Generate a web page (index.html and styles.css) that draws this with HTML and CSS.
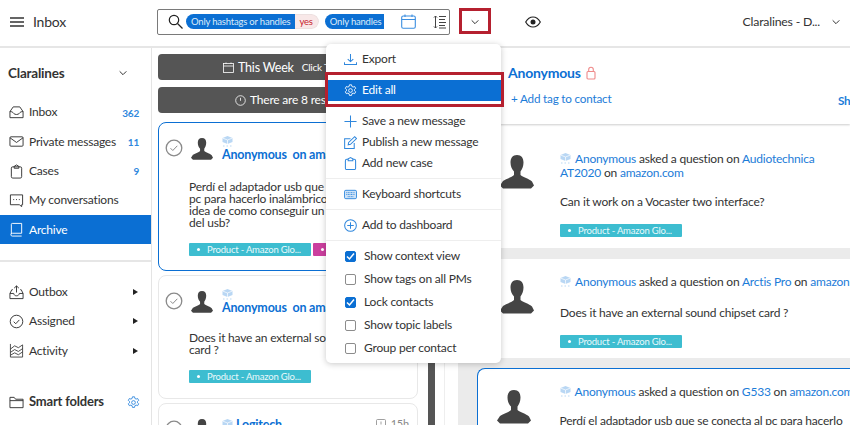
FILE: index.html
```html
<!DOCTYPE html>
<html lang="en">
<head>
<meta charset="utf-8">
<title>Inbox</title>
<link rel="stylesheet" href="styles.css">
</head>
<body>
<svg class="defs" width="0" height="0">
  <symbol id="avatar" viewBox="0 0 34 34"><path d="M17 0c4.500 0 6.500 3 6.500 7.500 0 4-1.500 7-3 9v3.500c2 2 9 4 11.500 6.500l2 4-3 3H3l-3-3 3-4.500C5.500 24 12.500 22 14 20v-3.500c-2-2-3.500-5-3.500-9C10.500 3 12.500 0 17 0z" fill="#444"/></symbol>
  <symbol id="cube" viewBox="0 0 11 11"><path d="M5.500 0l5 2v4l-5 2-5-2V2z" fill="#b9d7f4"/><path d="M5.500 4v4M.5 2l5 2 5-2" stroke="#fff" stroke-width=".7" fill="none"/><path d="M1 10h1.500M4.500 10H6M8 10h1.500" stroke="#b9d7f4" stroke-width="1.200"/></symbol>
  <symbol id="check" viewBox="0 0 18 18"><circle cx="9" cy="9" r="7.800" fill="none" stroke="#8a8a8a" stroke-width="1.300"/><path d="M5.500 9.200l2.300 2.300 4.500-4.700" fill="none" stroke="#8a8a8a"/></symbol>
  <symbol id="chev" viewBox="0 0 12 12"><path d="M2 4l4 4 4-4" fill="none" stroke="#333" stroke-width="1.200"/></symbol>
  <symbol id="gear" viewBox="0 0 16 16"><path d="M6.700 1h2.600l.4 2 1.500.8 1.900-.7 1.300 2.300-1.500 1.300v1.600l1.500 1.300-1.300 2.300-1.900-.7-1.500.8-.4 2H6.700l-.4-2-1.500-.8-1.900.7L1.600 9.600l1.500-1.300V6.700L1.600 5.400l1.300-2.300 1.900.7 1.500-.8z" fill="none" stroke="currentColor" stroke-width="1.100"/><circle cx="8" cy="8" r="2.300" fill="none" stroke="currentColor" stroke-width="1.100"/></symbol>
</svg>

<header class="topbar">
  <div class="brand">
    <svg class="burger" width="14" height="10" viewBox="0 0 14 10"><path d="M0 1h14M0 5h14M0 9h14" stroke="#333" stroke-width="1.300"/></svg>
    <span>Inbox</span>
  </div>
  <div class="search">
    <svg class="search-glass" width="15" height="15" viewBox="0 0 15 15"><circle cx="6" cy="6" r="4.700" fill="none" stroke="#222" stroke-width="1.200"/><path d="M9.500 9.500l5 5" stroke="#222" stroke-width="1.300"/></svg>
    <span class="chip"><span class="chip-key">Only hashtags or handles</span><span class="chip-val">yes</span></span>
    <span class="chip chip-cut"><span class="chip-key">Only handles</span></span>
    <svg class="search-cal" width="15" height="15" viewBox="0 0 15 15"><rect x=".7" y="2" width="13.600" height="12.300" rx="1.500" fill="none" stroke="#3b8ee0" stroke-width="1.100"/><path d="M.7 5.500h13.600M4 .5v2.500M11 .5v2.500" stroke="#3b8ee0" stroke-width="1.100"/></svg>
    <svg class="search-sort" width="14" height="14" viewBox="0 0 14 14"><path d="M2.500 1v12M1 2.500L2.500 1 4 2.500M1 11.500L2.500 13 4 11.500M6 1.500h7M6 4.500h6M6 7.500h7M6 10.500h6M6 13h7" fill="none" stroke="#444" stroke-width="1"/></svg>
  </div>
  <button class="more" type="button"><svg width="10" height="10"><use href="#chev"/></svg></button>
  <svg class="eye" width="16" height="12" viewBox="0 0 16 12"><path d="M.7 6C2.500 2.800 5 1 8 1s5.500 1.800 7.300 5C13.500 9.200 11 11 8 11S2.500 9.200.7 6z" fill="none" stroke="#222" stroke-width="1.200"/><circle cx="8" cy="6" r="2.500" fill="#222"/></svg>
  <div class="account"><span>Claralines - D...</span><svg width="10" height="10"><use href="#chev"/></svg></div>
</header>

<main class="app">
  <aside class="side">
    <div class="side-title"><span>Claralines</span><svg width="10" height="10"><use href="#chev"/></svg></div>
    <nav class="nav">
      <a class="nav-item"><svg class="nav-ic" viewBox="0 0 16 16"><path d="M1 7l3.500-5h7L15 7v6.500H1zM1 7c2 0 3 .5 4 2 1.500 1.500 4.500 1.500 6 0 1-1.500 2-2 4-2" fill="none" stroke="#333"/></svg><span class="nav-label">Inbox</span><span class="count">362</span></a>
      <a class="nav-item"><svg class="nav-ic" viewBox="0 0 16 16"><rect x="1" y="3" width="14" height="10" rx="1" fill="none" stroke="#333"/><path d="M1 4l7 5 7-5" fill="none" stroke="#333"/></svg><span class="nav-label">Private messages</span><span class="count">11</span></a>
      <a class="nav-item"><svg class="nav-ic" viewBox="0 0 16 16"><rect x="2.500" y="3" width="11" height="12" rx="1.500" fill="none" stroke="#333"/><path d="M5.500 4.500V2.500L8 1l2.500 1.500v2z" fill="none" stroke="#333"/></svg><span class="nav-label">Cases</span><span class="count">9</span></a>
      <a class="nav-item"><svg class="nav-ic" viewBox="0 0 16 16"><path d="M1.500 2h13v10.500h-1v2l-2.500-2H1.500z" fill="none" stroke="#333"/><path d="M4.500 7h1M7.500 7h1M10.500 7h1" stroke="#333"/></svg><span class="nav-label">My conversations</span></a>
      <a class="nav-item nav-active"><svg class="nav-ic" viewBox="0 0 16 16"><path d="M2.500 13V2.500A1 1 0 0 1 3.500 1.500h10v10.500h-10a1.500 1.500 0 0 0 0 3h10" fill="none" stroke="#fff"/></svg><span class="nav-label">Archive</span></a>
    </nav>
    <hr class="side-rule">
    <nav class="nav">
      <a class="nav-item"><svg class="nav-ic" viewBox="0 0 16 16"><path d="M4 5H3L1 9v5.500h14V9l-2-4h-1M1 9h4c.5 2 1.500 2.500 3 2.500s2.500-.5 3-2.500h4M8 8V1M5.500 3.300L8 1l2.500 2.300" fill="none" stroke="#333"/></svg><span class="nav-label">Outbox</span><span class="tri"></span></a>
      <a class="nav-item"><svg class="nav-ic" viewBox="0 0 16 16"><circle cx="8" cy="8" r="6.700" fill="none" stroke="#333"/><path d="M5 8.200l2.200 2.200L11 6.300" fill="none" stroke="#333"/></svg><span class="nav-label">Assigned</span><span class="tri"></span></a>
      <a class="nav-item"><svg class="nav-ic" viewBox="0 0 16 16"><path d="M1.500 1v14h13V2L10 5 6 3 1.500 6.500M1.500 10L6 7l4 2 4.500-3M1.500 13L6 10.500l4 2 4.500-3" fill="none" stroke="#333" stroke-width=".9"/></svg><span class="nav-label">Activity</span><span class="tri"></span></a>
    </nav>
    <div class="folders">
      <svg class="nav-ic" viewBox="0 0 16 16"><path d="M1 13.500v-11h4.500l1.500 2h8v9zM1 6h14" fill="none" stroke="#333"/></svg>
      <strong>Smart folders</strong>
      <svg class="folders-gear" width="13" height="13"><use href="#gear"/></svg>
    </div>
  </aside>

  <section class="list">
    <div class="list-col">
      <div class="bar"><svg width="11" height="11" viewBox="0 0 11 11"><rect x=".5" y="1.500" width="10" height="9" fill="none" stroke="#fff" stroke-width=".8"/><path d="M.5 4h10M3 .5V2M8 .5V2" stroke="#fff" stroke-width=".8"/></svg><span class="bar-main">This Week</span><span class="bar-sub">Click To Change</span></div>
      <div class="bar"><svg width="11" height="11" viewBox="0 0 11 11"><circle cx="5.500" cy="5.500" r="4.800" fill="none" stroke="#fff" stroke-width=".8"/><path d="M5.500 2.800v3" stroke="#fff" stroke-width=".8"/></svg><span class="bar-main bar-plain">There are 8 results</span></div>

      <article class="card card-sel">
        <div class="card-head">
          <svg class="card-check" width="18" height="18"><use href="#check"/></svg>
          <svg class="card-av" width="22" height="22"><use href="#avatar"/></svg>
          <div class="card-who"><svg class="card-cube" width="11" height="11"><use href="#cube"/></svg><strong>Anonymous &nbsp;on amazon</strong></div>
        </div>
        <p class="card-text">Perdí el adaptador usb que se conecta<br>pc para hacerlo inalámbrico<br>idea de como conseguir un<br>del usb?</p>
        <div class="tags"><span class="tag">Product - Amazon Glo...</span><span class="tag tag-pink">Other</span></div>
      </article>

      <article class="card">
        <div class="card-head">
          <svg class="card-check" width="18" height="18"><use href="#check"/></svg>
          <svg class="card-av" width="22" height="22"><use href="#avatar"/></svg>
          <div class="card-who"><svg class="card-cube" width="11" height="11"><use href="#cube"/></svg><strong>Anonymous &nbsp;on amazon</strong></div>
        </div>
        <p class="card-text">Does it have an external sound chipset<br>card ?</p>
        <div class="tags"><span class="tag">Product - Amazon Glo...</span></div>
      </article>

      <article class="card card-last">
        <div class="card-head">
          <svg class="card-check" width="18" height="18"><use href="#check"/></svg>
          <svg class="card-av" width="22" height="22"><use href="#avatar"/></svg>
          <div class="card-who card-who-row"><svg class="card-cube" width="11" height="11"><use href="#cube"/></svg><strong>Logitech</strong><span class="card-time"><svg width="10" height="10" viewBox="0 0 10 10"><rect x=".5" y=".5" width="9" height="9" rx="1" fill="none" stroke="#888" stroke-width=".8"/><path d="M5 2.500v3" stroke="#888" stroke-width=".8"/></svg>15h</span></div>
        </div>
      </article>
    </div>
    <div class="scroll"><span class="thumb"></span></div>
  </section>

  <section class="detail">
    <div class="contact">
      <div class="contact-name"><strong>Anonymous</strong><svg width="10" height="14" viewBox="0 0 10 14"><rect x="1" y="5.500" width="8" height="7.500" rx="1" fill="none" stroke="#ef8a8a" stroke-width="1.100"/><path d="M2.700 5.500V3.500a2.300 2.300 0 0 1 4.600 0v2" fill="none" stroke="#ef8a8a" stroke-width="1.100"/></svg></div>
      <div class="contact-row"><a class="contact-tag">+ Add tag to contact</a><strong class="contact-show">Show</strong></div>
    </div>
    <div class="thread">
      <article class="msg">
        <svg class="msg-av" width="34" height="34"><use href="#avatar"/></svg>
        <div class="msg-body">
          <p class="msg-line"><svg class="msg-cube" width="11" height="11"><use href="#cube"/></svg><a>Anonymous</a> asked a question on <a>Audiotechnica</a><br><a>AT2020</a> on <a>amazon.com</a></p>
          <p class="msg-text">Can it work on a Vocaster two interface?</p>
          <span class="tag">Product - Amazon Glo...</span>
        </div>
      </article>
      <article class="msg msg-two">
        <svg class="msg-av" width="34" height="34"><use href="#avatar"/></svg>
        <div class="msg-body">
          <p class="msg-line msg-nowrap"><svg class="msg-cube" width="11" height="11"><use href="#cube"/></svg><a>Anonymous</a> asked a question on <a>Arctis Pro</a> on <a>amazon.com</a></p>
          <p class="msg-text">Does it have an external sound chipset card ?</p>
          <span class="tag">Product - Amazon Glo...</span>
        </div>
      </article>
      <article class="msg msg-sel">
        <svg class="msg-av" width="34" height="34"><use href="#avatar"/></svg>
        <div class="msg-body">
          <p class="msg-line msg-nowrap"><svg class="msg-cube" width="11" height="11"><use href="#cube"/></svg><a>Anonymous</a> asked a question on <a>G533</a> on <a>amazon.com</a></p>
          <p class="msg-text msg-nowrap">Perdí el adaptador usb que se conecta al pc para hacerlo</p>
        </div>
      </article>
    </div>
  </section>
</main>

<div class="menu">
  <a class="mi"><svg class="mi-ic" viewBox="0 0 14 14"><path d="M7 1v8M4 6.500L7 9.300l3-2.800M.5 10v2.500h13V10" fill="none" stroke="#2f87dd" stroke-width="1.100"/></svg><span>Export</span></a>
  <a class="mi mi-active"><svg class="mi-ic" viewBox="0 0 16 16"><use href="#gear"/></svg><span>Edit all</span></a>
  <div class="mi-group">
    <a class="mi"><svg class="mi-ic" viewBox="0 0 14 14"><path d="M7 .5v13M.5 7h13" stroke="#2f87dd" stroke-width="1.100"/></svg><span>Save a new message</span></a>
    <a class="mi"><svg class="mi-ic" viewBox="0 0 14 14"><path d="M11 7.500v6H.7V3H7" fill="none" stroke="#2f87dd" stroke-width="1.100"/><path d="M4.500 9.500l.5-2.500L11.500.8l2 2L7 9z" fill="none" stroke="#2f87dd" stroke-width="1.100"/></svg><span>Publish a new message</span></a>
    <a class="mi"><svg class="mi-ic" viewBox="0 0 14 14"><rect x="1.500" y="2.500" width="11" height="11" rx="1.500" fill="none" stroke="#2f87dd" stroke-width="1.100"/><path d="M4.500 4V2L7 .7 9.500 2v2z" fill="#fff" stroke="#2f87dd" stroke-width="1.100"/></svg><span>Add new case</span></a>
  </div>
  <div class="mi-group mi-ruled">
    <a class="mi"><svg class="mi-ic" viewBox="0 0 14 10"><rect x=".5" y=".5" width="13" height="9" rx="1.500" fill="#cfe3f7" stroke="#2f87dd"/><path d="M2.500 3h9M2.500 5h9M4 7.300h6" stroke="#2f87dd" stroke-dasharray="1 .7"/></svg><span>Keyboard shortcuts</span></a>
  </div>
  <div class="mi-group mi-ruled">
    <a class="mi"><svg class="mi-ic" viewBox="0 0 14 14"><circle cx="7" cy="7" r="6.300" fill="none" stroke="#2f87dd" stroke-width="1.100"/><path d="M7 3.500v7M3.500 7h7" stroke="#2f87dd" stroke-width="1.100"/></svg><span>Add to dashboard</span></a>
  </div>
  <div class="checks mi-ruled">
    <label class="ck"><span class="box box-on"><svg width="9" height="9" viewBox="0 0 9 9"><path d="M1 4.500l2.500 2.500L8 1.500" fill="none" stroke="#fff" stroke-width="1.500"/></svg></span>Show context view</label>
    <label class="ck"><span class="box"></span>Show tags on all PMs</label>
    <label class="ck"><span class="box box-on"><svg width="9" height="9" viewBox="0 0 9 9"><path d="M1 4.500l2.500 2.500L8 1.500" fill="none" stroke="#fff" stroke-width="1.500"/></svg></span>Lock contacts</label>
    <label class="ck"><span class="box"></span>Show topic labels</label>
    <label class="ck"><span class="box"></span>Group per contact</label>
  </div>
</div>
<div class="callout callout-more"></div>
<div class="callout callout-edit"></div>
</body>
</html>
```

FILE: styles.css
```css
* { box-sizing: border-box; }
html, body { margin: 0; height: 100%; overflow: hidden; }
body {
  position: relative;
  width: 850px;
  height: 425px;
  background: #fff;
  color: #333;
  font: 12px/1.2 Lato, "Noto Sans", sans-serif;
  letter-spacing: -.2px;
  display: flex;
  flex-direction: column;
}
.defs { position: absolute; }
p { margin: 0; }
a { color: inherit; }
strong { font-weight: 700; }

.topbar {
  flex: 0 0 48px;
  display: flex;
  align-items: center;
  padding: 0 0 2px 10px;
  border-bottom: 2px solid #e6e6e6;
}
.brand { width: 147px; display: flex; align-items: center; gap: 9px; font-size: 14px; }
.search {
  width: 293px;
  height: 26px;
  border: 1px solid #7a7a7a;
  border-radius: 2px;
  display: flex;
  align-items: center;
  padding-left: 10px;
  margin-top: -1px;
  flex: none;
}
.search-glass { flex: none; }
.chip {
  margin-left: 3px;
  height: 15px;
  display: flex;
  flex: none;
  border-radius: 8px;
  overflow: hidden;
  font-size: 9.500px;
  line-height: 15px;
  white-space: nowrap;
}
.chip-key { background: #0b6fd3; color: #dcebfa; padding: 0 5px; }
.chip-val { background: #f8e8e8; color: #c8242f; padding: 0 5px 0 4px; border: 1px solid #ece0e0; border-left: 0; border-radius: 0 8px 8px 0; line-height: 13px; }
.chip-cut { margin-left: 6px; border-radius: 8px 0 0 8px; width: 59px; }
.chip-cut .chip-key { width: 59px; padding-right: 0; }
.search-cal { margin-left: 17px; flex: none; }
.search-sort { margin-left: 17px; flex: none; }
.more {
  width: 32px;
  height: 26px;
  margin-left: 9px;
  margin-top: -1px;
  padding: 0;
  background: none;
  border: 0;
  display: flex;
  flex: none;
  align-items: center;
  justify-content: center;
}
.eye { margin-left: 34px; }
.account {
  margin-left: auto;
  padding-right: 9px;
  display: flex;
  align-items: center;
  gap: 11px;
  font-size: 12.300px;
}

.app { flex: 1; display: flex; min-height: 0; }

.side { flex: 0 0 152px; border-right: 1px solid #e4e4e4; }
.side-title {
  display: flex;
  align-items: center;
  justify-content: space-between;
  padding: 0 23px 0 8px;
  height: 50px;
  font-size: 13.500px;
  font-weight: 700;
}
.nav-item {
  display: flex;
  align-items: center;
  height: 29.300px;
  padding: 0 12px 0 9px;
  font-size: 12px;
}
.nav-ic { width: 15px; height: 15px; flex: none; }
.nav-label { margin-left: 5px; flex: 1; white-space: nowrap; }
.count { color: #2f87dd; font-size: 10px; font-weight: 700; }
.nav-active { background: #0b6fd3; color: #fff; }
.side-rule { margin: 16px 0 15px; border: 0; border-top: 2px solid #e6e6e6; }
.tri {
  border-left: 5px solid #222;
  border-top: 3.500px solid transparent;
  border-bottom: 3.500px solid transparent;
  margin-right: 1px;
}
.folders {
  display: flex;
  align-items: center;
  margin-top: 29px;
  padding: 0 11px 0 9px;
  font-size: 13px;
}
.folders strong { margin-left: 5px; flex: 1; }
.folders-gear { color: #2f87dd; }

.list { flex: 0 0 293px; display: flex; border-right: 1px solid #eee; min-height: 0; overflow: hidden; }
.list-col { width: 276px; padding: 6px 10px 0 6px; flex: none; }
.bar {
  height: 26px;
  margin-bottom: 7px;
  background: #555;
  border-radius: 4px;
  color: #fff;
  display: flex;
  align-items: center;
  gap: 4px;
  padding-left: 65px;
  white-space: nowrap;
  overflow: hidden;
}
.bar + .bar { padding-left: 77px; }
.bar-main { font-size: 12.500px; }
.bar-plain { font-size: 12px; }
.bar-sub { font-size: 10px; margin-left: 4px; }

.card {
  border: 1px solid #e8e8e8;
  border-radius: 8px;
  padding: 9px 8px 0 6px;
  margin-bottom: 4px;
  height: 124px;
}
.card-sel { height: 149px; margin-top: 9px; border: 1.500px solid #0b6fd3; }
.card-last { height: 60px; }
.card-head { display: flex; align-items: flex-start; }
.card-check { margin: 6.500px 0 0 0; flex: none; }
.card-av { margin: 5.500px 0 0 8px; flex: none; }
.card-who { margin: 3.500px 0 0 9px; min-width: 0; flex: 1; }
.card-cube { display: block; }
.card-who strong { display: block; color: #0b6fd3; font-size: 12.500px; white-space: nowrap; line-height: 15px; }
.card-who-row { display: flex; align-items: center; gap: 3px; }
.card-time { margin-left: auto; color: #888; font-size: 11px; display: flex; align-items: center; gap: 5px; }
.card-text { margin: 19px 0 0 24px; font-size: 12px; line-height: 12.300px; height: 49px; white-space: nowrap; }
.card + .card .card-text { height: 26px; margin-top: 17px; }
.tags { display: flex; gap: 2px; margin: 13px 0 0 24px; }
.card + .card .tags { margin-top: 12px; }
.tag {
  display: block;
  flex: none;
  width: 122px;
  height: 13px;
  background: #3dbdd0;
  color: #eaf9fb;
  border-radius: 1px;
  font-size: 9.500px;
  letter-spacing: -.2px;
  line-height: 13px;
  padding-left: 18px;
  position: relative;
  white-space: nowrap;
  overflow: hidden;
}
.tag::before {
  content: "";
  position: absolute;
  left: 8px;
  top: 5px;
  width: 3px;
  height: 3px;
  border-radius: 50%;
  background: #fff;
}
.tag-pink { background: #cb3f9e; }

.scroll { flex: 0 0 7px; margin-top: 6px; background: #fff; }
.thumb { display: block; width: 7px; height: 100%; background: #555; margin-top: 0; }

.detail { flex: 1; display: flex; flex-direction: column; min-width: 0; overflow: hidden; }
.contact {
  flex: none;
  height: 76px;
  padding: 17px 0 0 63px;
  box-shadow: 0 1px 2px rgba(0,0,0,.2);
  position: relative;
  white-space: nowrap;
}
.contact-name { display: flex; align-items: center; gap: 5px; color: #0b6fd3; font-size: 14px; }
.contact-row { display: flex; margin: 9px 0 0 3px; color: #1c7cd8; font-size: 11.700px; width: 355px; }
.contact-show { margin-left: auto; padding-top: 2px; }
.thread { flex: 1; min-height: 0; background: #ebebeb; margin-left: 13px; padding-left: 19px; }
.msg { background: #fff; display: flex; height: 124px; margin-bottom: 11px; padding: 28px 0 0 23px; width: 400px; }
.msg-two { height: 99px; padding-top: 16px; margin-bottom: 10px; }
.msg-two .msg-av { margin-top: 5px; }
.msg-two .msg-text { margin-top: 17px; }
.msg-sel { border: 1.500px solid #0b6fd3; border-right: 0; border-radius: 8px 0 0 0; padding: 15.500px 0 0 18.500px; height: 80px; }
.msg-sel .msg-av { margin-top: 5px; }
.msg-av { flex: none; margin-top: 3px; }
.msg-body { margin-left: 26px; width: 300px; font-size: 12px; }
.msg-sel .msg-body { margin-left: 29px; }
.msg-line { line-height: 14px; }
.msg-line a { color: #1c7cd8; }
.msg-nowrap { white-space: nowrap; }
.msg-cube { margin-right: 4px; vertical-align: -1px; }
.msg-text { margin-top: 15px; line-height: 14px; }
.msg .tag { margin-top: 15px; }

.menu {
  position: absolute;
  left: 326px;
  top: 44px;
  width: 175px;
  height: 319px;
  background: #fff;
  border-radius: 5px;
  box-shadow: 0 1px 6px rgba(0,0,0,.22);
  padding-top: 5px;
  font-size: 12px;
}
.mi { display: flex; align-items: center; height: 21px; padding-left: 18px; gap: 5px; white-space: nowrap; }
.mi-ic { width: 13px; height: 13px; flex: none; color: #2f87dd; }
.mi-active { margin: 10px 0; background: #0b6fd3; color: #fff; }
.mi-active .mi-ic { color: #fff; }
.mi-group { padding-bottom: 4px; }
.mi-ruled { border-top: 1px solid #eee; padding-top: 5px; padding-bottom: 4px; }
.checks { padding-top: 4px; }
.ck { display: flex; align-items: center; height: 23px; padding-left: 19px; gap: 8px; white-space: nowrap; }
.box { width: 11px; height: 11px; border: 1px solid #8c8c8c; border-radius: 2px; display: flex; align-items: center; justify-content: center; }
.box-on { background: #0b6fd3; border-color: #0b6fd3; }

.callout { position: absolute; border: 3px solid #b5202f; }
.callout-more { left: 459px; top: 8px; width: 32px; height: 26px; }
.callout-edit { left: 325px; top: 72px; width: 179px; height: 35px; }
```
